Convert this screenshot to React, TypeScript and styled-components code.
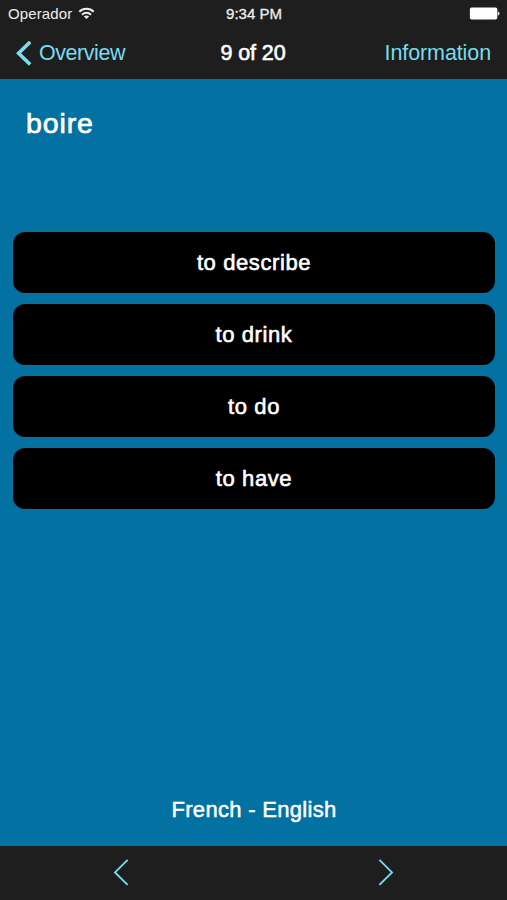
import React from "react";
import styled, { createGlobalStyle } from "styled-components";

const GlobalStyle = createGlobalStyle`
  * { box-sizing: border-box; }
  body { margin: 0; background: #1e1e1e; }
`;

const ACCENT = "#78dbee";

const Screen = styled.div`
  width: 100%;
  height: 900px;
  display: flex;
  flex-direction: column;
  overflow: hidden;
  background: #0371a2;
  color: #fff;
  font-family: "Liberation Sans", Arial, sans-serif;
`;

const Label = styled.span<{ $size: number; $spacing?: number; $stroke?: number }>`
  font-size: ${(p) => p.$size}px;
  letter-spacing: ${(p) => p.$spacing ?? 0}px;
  -webkit-text-stroke: ${(p) => p.$stroke ?? 0}px currentColor;
  line-height: 1.2;
  white-space: nowrap;
`;

const StatusBar = styled.header`
  height: 27px;
  flex: none;
  display: grid;
  grid-template-columns: 1fr auto 1fr;
  align-items: center;
  padding: 0 7px 0 8px;
  background: #1e1e1e;
  color: #eee;
`;

const Carrier = styled.div`
  display: flex;
  align-items: center;
  gap: 6px;
`;

const BatterySlot = styled.div`
  display: flex;
  justify-content: flex-end;
`;

const NavBar = styled.nav`
  height: 52px;
  flex: none;
  display: grid;
  grid-template-columns: 1fr auto 1fr;
  align-items: center;
  padding: 1px 16px 0 15px;
  background: #1e1e1e;
`;

const NavButton = styled.button<{ $end?: boolean }>`
  display: flex;
  align-items: center;
  justify-self: ${(p) => (p.$end ? "end" : "start")};
  gap: 6px;
  padding: 0;
  border: 0;
  background: none;
  color: ${ACCENT};
  font-family: inherit;
`;

const Quiz = styled.main`
  flex: 1;
  display: flex;
  flex-direction: column;
`;

const Word = styled.h1`
  height: 153px;
  margin: 0;
  padding: 27px 25px 0 26px;
  font-weight: 400;
  line-height: 1;
`;

const Answers = styled.div`
  display: flex;
  flex-direction: column;
  gap: 11px;
  padding: 0 12px 0 13px;
`;

const Answer = styled.button`
  height: 61px;
  display: flex;
  align-items: center;
  justify-content: center;
  padding: 2px 0 0;
  border: 0;
  border-radius: 12px;
  background: #000;
  color: #fff;
  font-family: inherit;
`;

const Languages = styled.footer`
  margin-top: auto;
  padding: 0 0 23px 1px;
  text-align: center;
`;

const Toolbar = styled.div`
  height: 54px;
  flex: none;
  display: flex;
  justify-content: space-between;
  align-items: center;
  padding: 0 112px 2px;
  background: #1e1e1e;
`;

const ToolButton = styled.button`
  display: flex;
  padding: 0;
  border: 0;
  background: none;
`;

const WifiIcon = () => (
  <svg width="17" height="13" viewBox="0 0 17 13" fill="none" stroke="#eee" strokeWidth="2">
    <path d="M1.3 4.7C5.3 0.7 11.7 0.7 15.7 4.7" />
    <path d="M4 7.7C6.5 5.2 10.5 5.2 13 7.7" />
    <path d="M8.5 12.1L5.9 9.5C7.3 8.1 9.7 8.1 11.1 9.5Z" fill="#eee" stroke="none" />
  </svg>
);

const BatteryIcon = () => (
  <svg width="31" height="13" viewBox="0 0 31 13" fill="#fff">
    <rect x="0.9" y="0.4" width="27.4" height="12.2" rx="1.8" />
    <path d="M28.8 4.5C31 4.9 31 8.1 28.8 8.5Z" />
  </svg>
);

const BackIcon = () => (
  <svg width="18" height="26" viewBox="0 0 18 26" fill="none" stroke={ACCENT} strokeWidth="3.6">
    <path d="M15.2 0.9L3.6 12.2L15.2 23.5" />
  </svg>
);

const PreviousIcon = () => (
  <svg width="18" height="28" viewBox="0 0 18 28" fill="none" stroke={ACCENT} strokeWidth="1.9">
    <path d="M15.6 1.9L3 14.4L15.6 26.9" />
  </svg>
);

const NextIcon = () => (
  <svg width="18" height="28" viewBox="0 0 18 28" fill="none" stroke={ACCENT} strokeWidth="1.9">
    <path d="M2.4 1.9L15 14.4L2.4 26.9" />
  </svg>
);

const options = ["to describe", "to drink", "to do", "to have"];

export default function App() {
  return (
    <>
      <GlobalStyle />
      <Screen>
        <StatusBar>
          <Carrier>
            <Label $size={15} $spacing={0.12}>Operador</Label>
            <WifiIcon />
          </Carrier>
          <Label $size={15} $stroke={0.3}>9:34 PM</Label>
          <BatterySlot>
            <BatteryIcon />
          </BatterySlot>
        </StatusBar>
        <NavBar>
          <NavButton>
            <BackIcon />
            <Label $size={21.5} $spacing={-0.45}>Overview</Label>
          </NavButton>
          <Label $size={21.5} $spacing={-0.1} $stroke={0.6}>9 of 20</Label>
          <NavButton $end>
            <Label $size={21.5} $spacing={-0.1}>Information</Label>
          </NavButton>
        </NavBar>
        <Quiz>
          <Word>
            <Label $size={28.5} $spacing={0.9} $stroke={0.7}>boire</Label>
          </Word>
          <Answers>
            {options.map((option) => (
              <Answer key={option}>
                <Label $size={22} $spacing={0.6} $stroke={0.6}>{option}</Label>
              </Answer>
            ))}
          </Answers>
          <Languages>
            <Label $size={22} $spacing={0.3} $stroke={0.5}>French - English</Label>
          </Languages>
        </Quiz>
        <Toolbar>
          <ToolButton aria-label="Previous">
            <PreviousIcon />
          </ToolButton>
          <ToolButton aria-label="Next">
            <NextIcon />
          </ToolButton>
        </Toolbar>
      </Screen>
    </>
  );
}
